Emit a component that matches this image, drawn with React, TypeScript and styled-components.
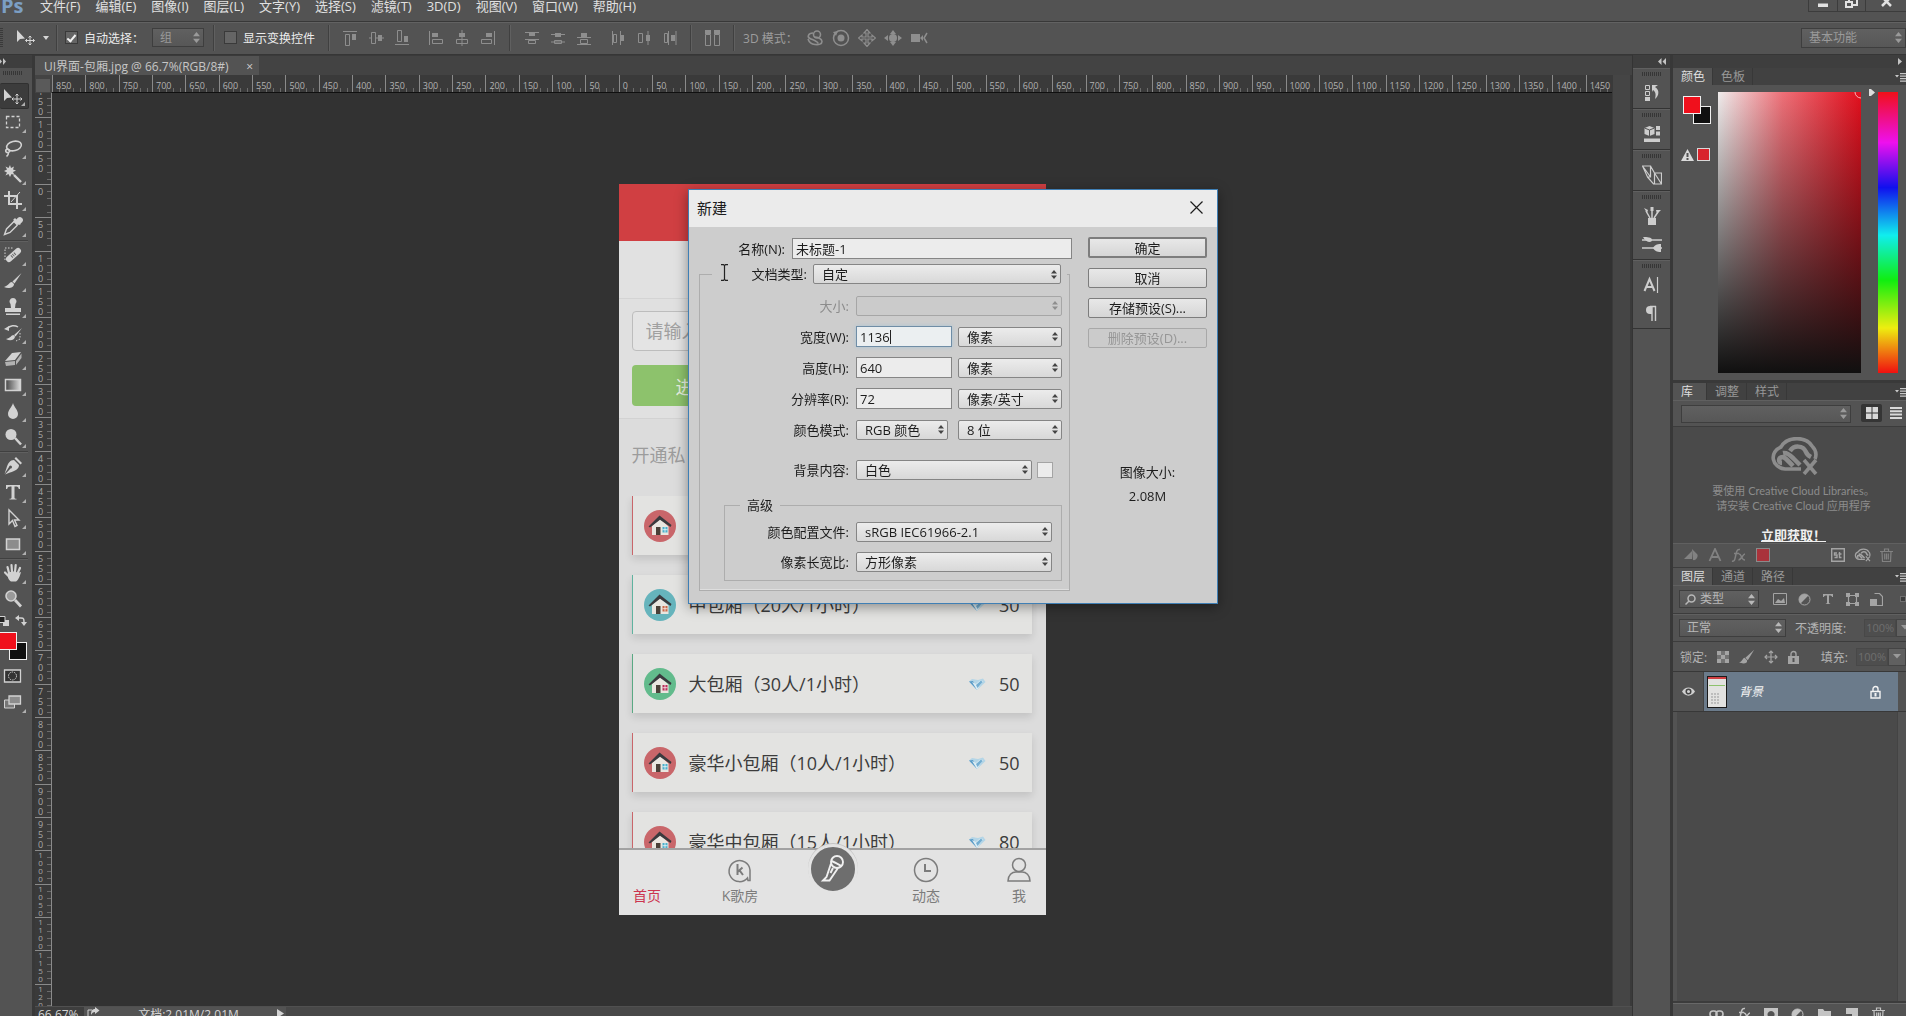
import React, { useId, type ReactNode } from 'react';
import styled, { createGlobalStyle, css } from 'styled-components';

const ui = `'Open Sans', 'Noto Sans CJK SC', sans-serif`;

const GlobalStyle = createGlobalStyle`
  *, *::before, *::after { box-sizing: border-box; }
  body { margin: 0; overflow: hidden; background: #323232; font-family: ${ui}; font-size: 12px; color: #d6d6d6; }
  button, input, select { font: inherit; color: inherit; margin: 0; border-radius: 0; outline: none; }
  button { border: 0; padding: 0; background: none; }
  svg { display: block; flex: none; }
`;

/* ---------- icon helper ---------- */
const Icon = ({ s = 20, w, h, vb, children, fill = 'none', stroke = 'currentColor', sw = 1 }: {
  s?: number; w?: number; h?: number; vb?: string; children?: ReactNode; fill?: string; stroke?: string; sw?: number;
}) => (
  <svg width={w ?? s} height={h ?? s} viewBox={vb ?? `0 0 ${w ?? s} ${h ?? s}`} fill={fill} stroke={stroke} strokeWidth={sw} aria-hidden="true">
    {children}
  </svg>
);

const F = { fill: 'currentColor', stroke: 'none' };

/* ---------- frame ---------- */
const Shell = styled.div`
  display: flex; flex-direction: column; height: 100vh; overflow: hidden; background: #535353;
`;
const MenuBar = styled.header`
  display: flex; align-items: flex-start; justify-content: space-between; height: 22px; flex: none;
  background: #535353; border-bottom: 1px solid #383838;
`;
const MenuList = styled.nav`display: flex; gap: 15px;`;
const Logo = styled.span`
  width: 25px; padding-left: 1px; font-weight: 700; font-size: 20px; line-height: 12px; color: #7c9fc4;
`;
const MenuItem = styled.button`font-size: 13px; line-height: 12px; color: #e0e0e0; white-space: nowrap;`;
const WindowButtons = styled.div`display: flex; height: 12px; border: 1px solid #3c3c3c; border-top: 0; border-right: 0; overflow: hidden;`;
const WindowButton = styled.button<{ $wide?: boolean }>`
  width: ${p => (p.$wide ? 41 : 28)}px; display: flex; justify-content: center; align-items: flex-start; color: #e2e2e2;
  & + & { border-left: 1px solid #3c3c3c; }
`;

const OptionsBar = styled.div`
  display: flex; align-items: center; height: 33px; flex: none; padding-bottom: 2px; background: #535353;
  border-top: 1px solid #626262; border-bottom: 1px solid #363636; overflow: hidden;
`;
const Grip = styled.span<{ $h?: boolean }>`
  flex: none;
  ${p => p.$h
    ? css`width: 20px; height: 4px; background: repeating-linear-gradient(to right, #363636 0 1px, transparent 1px 2px);`
    : css`width: 3px; height: 20px; background: repeating-linear-gradient(to bottom, #3a3a3a 0 1px, transparent 1px 2px);`}
`;
const Divider = styled.span<{ $gap?: number }>`
  flex: none; width: 2px; height: 26px; margin: 0 ${p => p.$gap ?? 8}px; background: #404040; border-right: 1px solid #606060;
`;
const OptionGroup = styled.div<{ $ml?: number }>`display: flex; align-items: center; margin-left: ${p => p.$ml ?? 0}px;`;
const OptionButton = styled.button`
  width: 26px; height: 22px; display: flex; align-items: center; justify-content: center; color: #8e8e8e;
`;
const CheckLabel = styled.label`display: flex; align-items: center; gap: 6px; font-size: 12px; color: #ececec; white-space: nowrap;`;
const CheckBox = styled.input`
  appearance: none; width: 13px; height: 13px; flex: none; border: 1px solid #3a3a3a; background: #656565; display: grid; place-items: center;
  &:checked::after { content: ''; width: 5px; height: 9px; border: solid #f2f2f2; border-width: 0 2px 2px 0; transform: rotate(40deg); }
`;
const Muted = styled.span`color: #9d9d9d; white-space: nowrap;`;
const Spacer = styled.span`flex: 1;`;

/* dark-theme drop-down */
const DarkWrap = styled.span<{ $w?: number; $h?: number; $dim?: boolean; $lead?: boolean }>`
  display: grid; align-items: center; height: ${p => p.$h ?? 19}px; flex: none;
  width: ${p => (p.$w ? `${p.$w}px` : 'auto')};
  color: ${p => (p.$dim ? '#9a9a9a' : '#b8b8b8')};
  select { grid-area: 1 / 1; appearance: none; width: 100%; height: 100%; padding: 0 16px 0 ${p => (p.$lead ? 20 : 7)}px; border: 1px solid #3e3e3e;
    background: linear-gradient(#606060, #575757); opacity: 1; font-size: 12px; line-height: 16px; }
  svg { grid-area: 1 / 1; justify-self: end; margin-right: 4px; pointer-events: none; }
  svg + svg { justify-self: start; margin: 0 0 0 6px; }
`;
const Arrows = () => <Icon w={7} h={11} stroke="none" fill="currentColor"><path d="M0 4.2 3.5 0 7 4.2zM0 6.800h7L3.5 11z" /></Icon>;
const DarkSelect = ({ label, value, w, h, dim, lead }: { label: string; value: string; w?: number; h?: number; dim?: boolean; lead?: ReactNode }) => (
  <DarkWrap $w={w} $h={h} $dim={dim} $lead={!!lead}>
    <select aria-label={label} defaultValue={value}><option>{value}</option></select><Arrows />{lead}
  </DarkWrap>
);

/* ---------- body ---------- */
const Body = styled.div`display: flex; flex: 1; min-height: 0;`;
const ToolColumn = styled.aside`
  width: 32px; flex: none; background: #535353; display: flex; flex-direction: column; align-items: stretch; overflow: hidden;
`;
const DockHeader = styled.div<{ $end?: boolean }>`
  height: 13px; flex: none; background: #3e3e3e; color: #c4c4c4; display: flex; align-items: center;
  justify-content: ${p => (p.$end ? 'flex-end' : 'flex-start')}; padding-right: ${p => (p.$end ? 4 : 0)}px;
`;
const ToolGrip = styled.div`height: 15px; flex: none; padding: 3px 0 0 3px;`;
const Tool = styled.button<{ $on?: boolean; $plain?: boolean }>`
  position: relative; width: 29px; height: 26px; flex: none; padding-left: 3px; display: flex; align-items: center; color: #d2d2d2;
  ${p => p.$on && css`background: #3c3c3c; border: 1px solid #303030; border-left: 0; border-radius: 2px;`}
  &::after { content: ${p => (p.$plain ? 'none' : "''")}; position: absolute; right: 3px; bottom: 2px; border: 2px solid; border-color: transparent #b0b0b0 #b0b0b0 transparent; }
`;
const ToolRule = styled.hr`width: 28px; height: 2px; flex: none; margin: 1px 0 0; border: 0; border-top: 1px solid #404040; background: #606060;`;
const SwatchRow = styled.div`height: 17px; flex: none; display: flex; align-items: center; justify-content: space-between; padding-right: 5px; color: #d2d2d2;`;
const SwatchPair = styled.div<{ $panel?: boolean }>`
  display: grid; flex: none; align-content: start;
  grid-template-columns: repeat(2, 10px) 8px; grid-template-rows: repeat(2, 10px) 8px;
  ${p => !p.$panel && css`margin: 3px 0 0 -1px; height: 31px;`}
`;
const Swatch = styled.button<{ $c: string; $back?: boolean }>`
  width: 18px; height: 18px; border: 1px solid #f0f0f0; background: ${p => p.$c};
  grid-area: ${p => (p.$back ? '2 / 2' : '1 / 1')}; z-index: ${p => (p.$back ? 0 : 1)};
`;

/* ---------- document ---------- */
const DocumentArea = styled.main`
  flex: 1; min-width: 0; display: flex; flex-direction: column; background: #444; border-left: 3px solid #383838; overflow: hidden;
`;
const TabBar = styled.div`height: 20px; flex: none; display: flex; background: #434343; border-top: 1px solid #3a3a3a;`;
const DocTab = styled.div`
  display: flex; align-items: center; justify-content: space-between; width: 224px; padding: 2px 6px 0 9px;
  background: #535353; color: #c6c6c6; font-size: 12px; line-height: 16px; white-space: nowrap;
`;
const TabClose = styled.button`color: #d0d0d0; font-size: 12px; line-height: 16px;`;
const Workspace = styled.div`
  flex: 1; min-height: 0; display: grid; grid-template-columns: 17px 1fr 20px; grid-template-rows: 18px 1fr 10px;
`;
const Corner = styled.div`margin: 4px 2px 1px 1px; background: #5a5a5a;`;
const RulerTop = styled.div`overflow: hidden; background: #3a3a3a; border-bottom: 1px solid #101010;`;
const RulerTopScale = styled.div`display: grid; grid-template-columns: repeat(47, minmax(0, 1fr)); width: 1567px; height: 17px;`;
const TickX = styled.span`
  border-left: 1px solid #8a8a8a; padding: 4px 0 0 3px; font-size: 9px; line-height: 13px; color: #b2b2b2;
  background: repeating-linear-gradient(to right, transparent 0 6px, #6a6a6a 6px 7px) 0 100% / 100% 4px no-repeat;
`;
const RulerLeft = styled.div`overflow: hidden; background: #3a3a3a; border-right: 1px solid #8a8a8a;`;
const RulerLeftScale = styled.div`display: grid; grid-template-rows: repeat(28, minmax(0, 1fr)); height: 933px; margin-top: -9px;`;
const TickY = styled.span<{ $n: number }>`
  display: flex; flex-direction: column; align-items: center; border-top: 1px solid #8a8a8a; padding: ${p => (p.$n > 3 ? 0 : 2)}px 5px 0 0; overflow: hidden;
  font-size: ${p => (p.$n > 3 ? 8 : 9)}px; line-height: ${p => (p.$n > 3 ? 8 : 10)}px; color: #a8a8a8;
  background: repeating-linear-gradient(to bottom, transparent 0 6px, #6a6a6a 6px 7px) 100% 0 / 4px 100% no-repeat;
`;
const Canvas = styled.div`background: #323232; display: flex; align-items: center; justify-content: center; overflow: hidden;`;
const Scroll = styled.div`background: #454545; border-left: 1px solid #3a3a3a; border-right: 2px solid #3a3a3a;`;
const StatusBar = styled.footer`
  grid-column: 1 / -1; display: flex; align-items: flex-start; overflow: hidden; background: #484848; color: #d4d4d4; border-top: 1px solid #505050;
  font-size: 12px; line-height: 16px; white-space: nowrap;
`;
const Zoomed = styled.span`width: 49px; padding-left: 3px; background: #3e3e3e;`;
const StatusInfo = styled.span`display: flex; justify-content: space-between; width: 202px; padding: 0 2px 0 3px; background: #535353;`;

/* ---------- phone artwork ---------- */
const Phone = styled.section`
  width: 427px; height: 731px; display: flex; flex-direction: column; background: #dcdcdc; color: #3c3c3c; overflow: hidden; flex: none;
`;
const PhoneHeader = styled.div`height: 57px; flex: none; background: #d03f42;`;
const PhoneBlank = styled.div`height: 58px; flex: none; background: #e1e1e1; border-bottom: 1px solid #d4d4d4;`;
const PhoneForm = styled.div`flex: none; height: 120px; padding: 12px 14px 0 13px; display: flex; flex-direction: column; gap: 14px; background: #e0e0e0; border-bottom: 1px solid #d2d2d2;`;
const PhoneInput = styled.input`height: 40px; border: 1px solid #bdbdbd; border-radius: 4px; background: #e4e4e4; padding: 0 13px; font-size: 18px; &::placeholder { color: #a0a0a0; opacity: 1; }`;
const PhoneGo = styled.button`height: 41px; border-radius: 4px; background: #8dc26c; color: #e6eede; font-size: 18px; text-align: left; padding-left: 44px;`;
const PhoneTitle = styled.h2`margin: 0; height: 77px; flex: none; padding: 0 13px; font-weight: 400; font-size: 18px; line-height: 72px; color: #9c9c9c;`;
const RoomList = styled.div`flex: 1; min-height: 0; overflow: hidden; display: flex; flex-direction: column; gap: 20px; padding: 0 14px 0 13px;`;
const Room = styled.div<{ $c: string }>`
  height: 59px; flex: none; display: flex; align-items: center; gap: 13px; padding: 0 12px 0 11px; background: #e3e3e1;
  border-left: 1px solid ${p => p.$c}; box-shadow: 0 4px 8px rgba(0,0,0,.12); font-size: 18px; line-height: 24px;
`;
const RoomName = styled.span`flex: 1; white-space: nowrap;`;
const PhoneNav = styled.nav`
  height: 67px; flex: none; display: grid; grid-template-columns: repeat(5, 1fr); margin: 0 -20px 0 -18px; background: #e3e3e3; border-top: 2px solid #a2a2a2;
`;
const NavItem = styled.a<{ $on?: boolean }>`
  display: flex; flex-direction: column; align-items: center; gap: 3px; padding-top: 7px; text-decoration: none;
  font-size: 14px; line-height: 20px; color: ${p => (p.$on ? '#cc3550' : '#7c7c7c')};
`;
const Mic = styled.button`
  position: relative; top: -6px; justify-self: center; width: 50px; height: 50px; border-radius: 50%; border: 3px solid #e3e3e3; background: #6e6e6e; color: #f0f0f0;
  display: grid; place-items: center; box-shadow: 0 -1px 0 0 #c4c4c4;
`;

const House = ({ c, win }: { c: string; win: string }) => (
  <Icon s={32} stroke="none">
    <circle cx="16" cy="16" r="16" fill={c} />
    <path d="M8 16 16 9l8.500 7.500V25H8z" fill="#e9e6e0" />
    <path d="M4.500 16.500 15.500 5.500l12 9.500-1 2L16 9.800 6 17.500z" fill="#3a3a3e" />
    <path d="M12 17h4.500v8H12z" fill="#4a4038" /><path d="M18.500 17h5v5.500h-5z" fill={win} />
    <path d="M21 17v5.500M18.500 19.700h5" stroke="#fff" strokeWidth=".7" />
  </Icon>
);
const Diamond = () => (
  <Icon w={18} h={14} stroke="none">
    <path d="M1 4.500 4 2l6 1 5-1.500L17.500 5 9 13z" fill="#b4d5e6" /><path d="m1 4.500 4-.5 4 9z" fill="#5a9cc8" />
    <path d="m4 5 4 2 4-3.500 3 .5-6 9z" fill="#dcedf4" /><path d="m8 8 5-4.500 1.500 1.500L9.500 11z" fill="#74aed2" />
  </Icon>
);

const rooms = [
  { name: '小包厢（10人/1小时）', price: 30, c: '#c9666a', line: '#c9666a', win: '#4db0cc' },
  { name: '中包厢（20人/1小时）', price: 30, c: '#66b4bc', line: '#5fb39f', win: '#c96a4a' },
  { name: '大包厢（30人/1小时）', price: 50, c: '#62bb8c', line: '#5aa983', win: '#b8305a' },
  { name: '豪华小包厢（10人/1小时）', price: 50, c: '#c9666a', line: '#c9666a', win: '#4db0cc' },
  { name: '豪华中包厢（15人/1小时）', price: 80, c: '#c9666a', line: '#c9666a', win: '#4db0cc' },
];

const PhoneArt = () => (
  <Phone>
    <PhoneHeader /><PhoneBlank />
    <PhoneForm>
      <PhoneInput aria-label="房间" placeholder="请输入" />
      <PhoneGo>进</PhoneGo>
    </PhoneForm>
    <PhoneTitle>开通私</PhoneTitle>
    <RoomList>
      {rooms.map(r => (
        <Room key={r.name} $c={r.line}>
          <House c={r.c} win={r.win} /><RoomName>{r.name}</RoomName><Diamond /><span>{r.price}</span>
        </Room>
      ))}
    </RoomList>
    <PhoneNav>
      <NavItem href="#home" $on><Icon s={26} />首页</NavItem>
      <NavItem href="#k">
        <Icon s={26} sw={1.500}><path d="M20.500 21A10.500 10.500 0 1 1 23 13v10.500h-2z" /><path d="M10.500 7v11M15.500 10.500l-5 4.500M12.500 13.300l3.500 4.700" strokeWidth="2" /></Icon>K歌房
      </NavItem>
      <Mic aria-label="录音">
        <Icon s={32} sw={1.900}><circle cx="20" cy="9" r="6" /><path d="M14.500 8c3 1 7 3.500 10 5M14 10.500 9.500 24 6 27.500h6.500L21 15" /><path d="m16 15-2.500 5" /></Icon>
      </Mic>
      <NavItem href="#news"><Icon s={26} sw={1.500}><circle cx="13" cy="13" r="11.500" /><path d="M12 7v7h6" strokeWidth="2" /></Icon>动态</NavItem>
      <NavItem href="#me"><Icon s={26} sw={1.500}><circle cx="13" cy="8" r="6.500" /><path d="M2 24c0-6 4-9 8-9h6c4 0 8 3 8 9z" /></Icon>我</NavItem>
    </PhoneNav>
  </Phone>
);

/* ---------- right side ---------- */
const IconDock = styled.aside`width: 41px; flex: none; background: #535353; border-left: 1px solid #343434; border-right: 3px solid #383838;`;
const DockGroup = styled.div`
  display: flex; flex-direction: column; align-items: center; gap: 5px; padding: 3px 0 4px; border-bottom: 1px solid #333; border-top: 1px solid #606060; color: #cdcdcd;
`;
const DockButton = styled.button`width: 30px; height: 22px; margin-top: 1px; display: grid; place-items: center;`;

const Panels = styled.aside`width: 233px; flex: none; display: flex; flex-direction: column; background: #535353; overflow: hidden;`;
const PanelTabs = styled.div`
  display: flex; height: 17px; flex: none; background: #414141; color: #989898; line-height: 16px; font-size: 12px;
`;
const PanelTab = styled.button<{ $on?: boolean }>`
  min-width: 34px; padding: 0 7px 0 8px; border-right: 1px solid #383838; text-align: left;
  ${p => p.$on && css`background: #535353; color: #dedede;`}
`;
const PanelMenu = styled.button`margin-left: auto; color: #c8c8c8; display: grid; align-items: center; width: 11px;`;
const ColorPanel = styled.div`display: flex; height: 298px; flex: none; padding: 7px 8px 0; border-bottom: 3px solid #393939;`;
const ColorLeft = styled.div`width: 37px; padding: 4px 0 0 2px; display: flex; flex-direction: column; gap: 24px;`;
const Warn = styled.div`display: flex; align-items: center; gap: 3px; color: #dadada; margin-left: -2px;`;
const Chip = styled.button<{ $c: string; $s: number; $line?: string }>`
  width: ${p => p.$s}px; height: ${p => p.$s}px; background: ${p => p.$c}; border: 1px solid ${p => p.$line ?? '#d8d8d8'};
`;
const Field = styled.div`
  flex: 1; height: 281px; overflow: hidden; display: flex; justify-content: flex-end; color: #f5b6b6;
  background: linear-gradient(to bottom, rgba(16,16,16,0), #101010), linear-gradient(to right, #efecec, #ee7078 45%, #e20f1d);
`;
const HuePointer = styled.div`width: 17px; padding-left: 8px; color: #ddd; margin-top: -3px;`;
const Hue = styled.div`
  width: 20px; height: 281px; flex: none;
  background: linear-gradient(#f01018, #ee10ee 18%, #1010ee 34%, #10eeee 51%, #10ee10 67%, #eeee10 84%, #f01010);
`;
const Row = styled.div<{ $h: number; $line?: boolean; $gap?: number; $pad?: number }>`
  display: flex; align-items: center; flex: none; height: ${p => p.$h}px; gap: ${p => p.$gap ?? 0}px; padding-left: ${p => p.$pad ?? 6}px; color: #b4b4b4; overflow: hidden;
  ${p => p.$line && css`border-bottom: 1px solid #3c3c3c; box-shadow: inset 0 1px #606060;`}
  > label, > span { white-space: nowrap; }
`;
const ViewButton = styled.button<{ $on?: boolean }>`
  width: 21px; height: 18px; flex: none; display: grid; place-items: center; color: #d8d8d8; border-radius: 2px; background: ${p => (p.$on ? '#353535' : 'none')};
`;
const LibraryBody = styled.div`
  height: 116px; flex: none; display: flex; flex-direction: column; align-items: center; padding: 10px 0 0 8px; background: #4a4a4a; color: #8c8c8c;
  font-family: Lato, 'Noto Sans CJK SC', sans-serif; font-size: 11px; line-height: 15px; text-align: center; white-space: nowrap;
  p { margin: 8px 0 14px; }
`;
const GetLink = styled.a`font-size: 13px; font-weight: 700; line-height: 16px; color: #f0f0f0;`;
const Small = styled.button<{ $w?: number; $dim?: boolean }>`
  width: ${p => p.$w ?? 24}px; height: 20px; flex: none; display: grid; place-items: center; color: ${p => (p.$dim ? '#828282' : '#a4a4a4')};
`;
const Percent = styled.input`width: 32px; height: 18px; flex: none; border: 1px solid #484848; background: #4e4e4e; color: #6e6e6e; font-size: 11px; text-align: center; padding: 0;`;
const DropButton = styled.button`width: 18px; height: 18px; flex: none; background: #606060; border: 1px solid #444; color: #9a9a9a; display: grid; place-items: center;`;
const LayerRow = styled.div`display: flex; height: 41px; flex: none; border-bottom: 1px solid #383838; border-top: 1px solid #383838;`;
const Eye = styled.button`width: 31px; display: grid; place-items: center; color: #cfcfcf; border-right: 1px solid #444;`;
const LayerMain = styled.div`flex: 1; display: flex; align-items: center; gap: 12px; padding: 0 17px 0 3px; margin-right: 8px; background: #6b7b8b; color: #f4f4f4; font-style: italic; font-size: 12px; line-height: 16px;`;
const LayerSpace = styled.div`flex: 1; margin: 0 8px 0 4px; background: #4a4a4a; border-right: 1px solid #444;`;
const PanelFoot = styled.div`
  height: 13px; flex: none; overflow: hidden; display: flex; align-items: flex-start; justify-content: center; padding-left: 16px; color: #d0d0d0; border-top: 1px solid #686868; box-shadow: 0 -2px #3c3c3c;
  ${Small} { color: #c4c4c4; }
`;

const MenuGlyph = () => <Icon w={11} h={10} stroke="none" fill="currentColor"><path d="M0 3h4L2 5.500zM5 1h6v1.200H5zM5 3.500h6v1.200H5zM5 6h6v1.200H5zM5 8.500h6v1.200H5z" /></Icon>;
const Cloud = ({ w = 50, h = 38 }: { w?: number; h?: number }) => (
  <Icon w={w} h={h} vb="0 0 50 38" sw={3.600}>
    <path d="M32 32H16A13 11.500 0 0 1 12 10C18-1 37-1 43 9c4 4 5 8 3 13" />
    <path d="M24 29c-4-4-7-8-10-9-5 0-5 6-1 6M14 16c5-1 8 3 11 6l6 6M21 14c4-6 13-6 16 1 1 3 3 4 5 5" strokeWidth="4.500" />
    <path d="m35 23 12 14M47 23 35 37" />
  </Icon>
);
const Lock = ({ open = false }: { open?: boolean }) => (
  <Icon w={11} h={14} sw={1.400}><path d="M3 6V4a2.500 2.500 0 0 1 5 0v2" />{open ? <><path d="M1 6.500h9v6.500H1z" /><path d="M4.500 8h2v3.500h-2z" {...F} /></> : <path d="M0 6h11v8H0zM4.500 8v4h2V8z" {...F} fillRule="evenodd" />}</Icon>
);
const Fx = () => <Icon w={16} h={14} sw={1.500}><path d="M1 13c3 1 3-3 4-7s2-5 4-4.500M3 5.500h5M8 6c3 0 2 6 6 6M14 6c-2 0-4 6-6.500 6" /></Icon>;
const Trash = () => <Icon w={13} h={14} sw={1.200}><path d="M0 3.500h13M4.500 3V1h4v2M2 4l.5 9.500h8L11 4M4.700 5.500v6M6.500 5.500v6M8.300 5.500v6" /></Icon>;
const HalfCircle = () => <Icon s={13}><circle cx="6.500" cy="6.500" r="5.500" strokeWidth="1" /><path d="M2.600 10.400A5.500 5.500 0 0 1 10.400 2.600z" {...F} /></Icon>;
const Down = () => <Icon w={8} h={5} stroke="none" fill="currentColor"><path d="M0 0h8L4 4.500z" /></Icon>;
const MoveCross = () => <Icon s={14} sw={1.200}><path d="M7 1v12M1 7h12M5 3l2-2 2 2M5 11l2 2 2-2M3 5 1 7l2 2M11 5l2 2-2 2" /></Icon>;
const Brush = () => <Icon s={20}><path d="M18.500 2 9.500 10.500l2 2z" {...F} /><path d="M9 11c-3 0-3 3.500-8 5 4 2 10 1 10-3z" {...F} /></Icon>;

/* ---------- dialog ---------- */
const Overlay = styled.div`position: fixed; inset: 0; display: flex; justify-content: center; align-items: flex-start; padding-top: 189px; pointer-events: none;`;
const Dialog = styled.section`
  width: 530px; background: #cdcdcd; border: 1px solid #3f7fb5; color: #1c1c1c; font-size: 13px; line-height: 16px; box-shadow: 0 3px 12px rgba(0,0,0,.4); pointer-events: auto;
`;
const DialogTitle = styled.div`
  height: 37px; display: flex; align-items: center; justify-content: space-between; padding: 0 14px 2px 8px; background: #ebebeb;
  h1 { margin: 0; font-weight: 400; font-size: 15px; line-height: 20px; }
`;
const DialogBody = styled.div`display: grid; grid-template-columns: 373px 119px; gap: 16px; padding: 10px 10px 12px;`;
const FormSide = styled.form`padding-top: 1px;`;
const Line = styled.div<{ $label: number; $gapTop?: number }>`
  display: grid; grid-template-columns: ${p => p.$label}px 1fr; column-gap: 7px; height: 21px; margin-top: ${p => p.$gapTop ?? 0}px; align-items: center;
  > label { text-align: right; white-space: nowrap; }
`;
const Controls = styled.div<{ $gap?: number }>`display: flex; gap: ${p => p.$gap ?? 6}px; align-items: center;`;
const boxInput = css`height: 21px; padding: 0 3px; border: 1px solid #858585; background: #ececec; line-height: 16px;`;
const NameInput = styled.input`${boxInput} width: 100%; min-width: 0;`;
const NumberInput = styled.input<{ $focus?: boolean }>`
  ${boxInput} width: 96px;
  ${p => p.$focus && css`border-color: #6f8da6; background: linear-gradient(#222, #222) 33px 3px / 1px 14px no-repeat, #ebeff1; box-shadow: 0 0 4px #a9c4d6;`}
`;
const Group = styled.fieldset`margin: 5px 2px 0 0; padding: 11px 0 9px; border: 1px solid #adadad; box-shadow: inset 0 -1px #dedede; min-width: 0;`;
const GroupLegend = styled.legend`display: flex; align-items: center; gap: 6px; margin-left: 12px; padding: 0 6px 0 0; label { width: 95px; text-align: right; }`;
const Fields = styled.div<{ $gap?: number }>`display: grid; row-gap: ${p => p.$gap ?? 10}px;`;
const Advanced = styled.fieldset`margin: 17px 7px 0 24px; padding: 8px 0; border: 1px solid #adadad; min-width: 0; display: block;`;
const AdvancedLegend = styled.legend`margin-left: 15px; padding: 0 7px; line-height: 16px;`;
const LightWrap = styled.span<{ $w: number; $off?: boolean }>`
  display: grid; align-items: center; width: ${p => p.$w}px; height: 20px; flex: none; color: ${p => (p.$off ? '#8e8e8e' : '#1c1c1c')};
  select { grid-area: 1 / 1; appearance: none; width: 100%; height: 100%; padding: 0 14px 0 8px; opacity: 1; border: 1px solid ${p => (p.$off ? '#a6a6a6' : '#858585')}; border-radius: 2px;
    background: ${p => (p.$off ? '#cbcbcb' : 'linear-gradient(#ececec, #d8d8d8)')}; }
  svg { grid-area: 1 / 1; justify-self: end; margin-right: 4px; pointer-events: none; }
`;
const LightSelect = ({ id, value, w, off, label }: { id?: string; value: string; w: number; off?: boolean; label?: string }) => (
  <LightWrap $w={w} $off={off}>
    <select id={id} aria-label={label} disabled={off} defaultValue={value}><option>{value}</option></select>
    <Icon w={6} h={9} stroke="none" fill={off ? '#8e8e8e' : '#444'}><path d="M0 3.500 3 0l3 3.500zM0 5.500h6L3 9z" /></Icon>
  </LightWrap>
);
const ButtonSide = styled.div`display: flex; flex-direction: column; gap: 10px;`;
const PushButton = styled.button<{ $main?: boolean }>`
  height: ${p => (p.$main ? 21 : 20)}px; flex: none; line-height: 16px; border: ${p => (p.$main ? 2 : 1)}px solid #7d7d7d; border-radius: 2px; background: linear-gradient(#e8e8e8, #d6d6d6);
  &:disabled { color: #969696; border-color: #a8a8a8; background: #cbcbcb; }
`;
const SizeInfo = styled.div`margin-top: 106px; display: grid; row-gap: 8px; text-align: center;`;
const Dim = styled.span<{ $off?: boolean }>`color: ${p => (p.$off ? '#8c8c8c' : 'inherit')};`;
const TextCursor = styled.span`position: absolute; left: 720px; top: 264px; color: #222;`;

const NumberLine = ({ label, value, unit, focus }: { label: string; value: string; unit: string; focus?: boolean }) => {
  const id = useId();
  return (
    <Line $label={149}>
      <label htmlFor={id}>{label}</label>
      <Controls><NumberInput id={id} defaultValue={value} $focus={focus} /><LightSelect label={`${label} 单位`} value={unit} w={104} /></Controls>
    </Line>
  );
};

const NewDialog = () => (
  <Overlay>
    <Dialog role="dialog" aria-labelledby="dlg-title">
      <DialogTitle>
        <h1 id="dlg-title">新建</h1>
        <button aria-label="关闭"><Icon s={13} sw={1.200}><path d="m.5.5 12 12M12.500.5l-12 12" /></Icon></button>
      </DialogTitle>
      <DialogBody>
        <FormSide>
          <Line $label={86}><label htmlFor="doc-name">名称(N):</label><NameInput id="doc-name" defaultValue="未标题-1" /></Line>
          <Group>
            <GroupLegend><label htmlFor="doc-type">文档类型:</label><LightSelect id="doc-type" value="自定" w={248} /></GroupLegend>
            <Fields>
              <Line $label={149}><label htmlFor="doc-size"><Dim $off>大小:</Dim></label><LightSelect id="doc-size" value="" w={206} off /></Line>
              <NumberLine label="宽度(W):" value="1136" unit="像素" focus />
              <NumberLine label="高度(H):" value="640" unit="像素" />
              <NumberLine label="分辨率(R):" value="72" unit="像素/英寸" />
              <Line $label={149}>
                <label htmlFor="mode">颜色模式:</label>
                <Controls $gap={10}><LightSelect id="mode" value="RGB 颜色" w={92} /><LightSelect label="位深" value="8 位" w={104} /></Controls>
              </Line>
              <Line $label={149} $gapTop={9}>
                <label htmlFor="bg">背景内容:</label>
                <Controls $gap={5}><LightSelect id="bg" value="白色" w={176} /><Chip type="button" aria-label="背景颜色" $c="#ececec" $s={16} $line="#a4a4a4" /></Controls>
              </Line>
            </Fields>
            <Advanced>
              <AdvancedLegend>高级</AdvancedLegend>
              <Fields $gap={9}>
                <Line $label={124}><label htmlFor="profile">颜色配置文件:</label><LightSelect id="profile" value="sRGB IEC61966-2.1" w={196} /></Line>
                <Line $label={124}><label htmlFor="aspect">像素长宽比:</label><LightSelect id="aspect" value="方形像素" w={196} /></Line>
              </Fields>
            </Advanced>
          </Group>
        </FormSide>
        <ButtonSide>
          <PushButton $main>确定</PushButton><PushButton>取消</PushButton><PushButton>存储预设(S)...</PushButton><PushButton disabled>删除预设(D)...</PushButton>
          <SizeInfo><span>图像大小:</span><span>2.08M</span></SizeInfo>
        </ButtonSide>
      </DialogBody>
    </Dialog>
    <TextCursor><Icon w={9} h={17} sw={1.200}><path d="M1 .7h2.500l1 1 1-1H8M4.500 1.500v14M1 16.300h2.500l1-1 1 1H8" /></Icon></TextCursor>
  </Overlay>
);

/* ---------- icon sets ---------- */
const bars = (a: string, b: string, line: string) => (
  <Icon s={16}><path d={line} /><path d={a} /><path d={b} {...F} /></Icon>
);
const alignA = [
  bars('M3.500 4.500h4v11h-4z', 'M10 4h4v6h-4z', 'M1 1.500h14'),
  bars('M3.500 2.500h4v11h-4z', 'M10 5h4v6h-4z', 'M1 8h2M7 8h9'),
  bars('M3.500 .5h4v11h-4z', 'M10 6h4v6h-4z', 'M1 14.500h14'),
];
const alignB = [
  bars('M4.500 9.500h10v4h-10z', 'M4 3h6v4H4z', 'M1.500 1v14'),
  bars('M2.500 9.500h11v4h-11z', 'M5 3h6v4H5z', 'M8 0v16'),
  bars('M1.500 9.500h10v4h-10z', 'M6 3h6v4H6z', 'M14.500 1v14'),
];
const distA = [
  bars('M4.500 10.500h7v3h-7z', 'M5 3h6v3H5z', 'M1 2.500h14M1 9.500h14'),
  bars('M4.500 10.500h7v3h-7z', 'M5 3h6v4H5z', 'M1 4.500h14M1 12h14'),
  bars('M4.500 9.500h7v4h-7z', 'M5 3h6v4H5z', 'M1 7.500h14M1 14.500h14'),
];
const distB = [
  bars('M3.500 4.500h3v8h-3z', 'M11 5h3v6h-3z', 'M2.500 1v14M10.500 1v14'),
  bars('M2.500 3.500h4v9h-4z', 'M10 5h4v6h-4z', 'M12 1v14'),
  bars('M2.500 3.500h3v9h-3z', 'M9 5h4v6H9z', 'M6.500 1v14M14 1v14'),
];
const mode3d = [
  <Icon s={18} sw={1.600}><circle cx="11" cy="5.500" r="3.500" /><path d="M7 4C2 4 1 8 4 9.500s8 3 8 5M8 8c4 0 8 2 8 4.500S13 16 9 15.500 3 13 2 10" /></Icon>,
  <Icon s={18} sw={1.500}><circle cx="9" cy="9" r="7.500" /><circle cx="9" cy="9" r="3.500" {...F} /><path d="m1 3 5-1-2 5z" {...F} /></Icon>,
  <Icon s={18} sw={1.200}><path d="M8 8V4H6l3-3.500L12 4h-2v4h4V6l3.500 3-3.500 3v-2h-4v4h2l-3 3.500L6 14h2v-4H4v2L.5 9 4 6v2z" /></Icon>,
  <Icon s={18}><path d="m9 1 3 4H6zM9 17l3-4H6zM0 9l4-3v6zM18 9l-4-3v6z" {...F} /><circle cx="9" cy="9" r="4" {...F} /></Icon>,
  <Icon s={18} sw={1.500}><path d="M1 5h9v8H1zM10 9l3-3v6z" {...F} /><path d="m17 4-3 5 3 5" /></Icon>,
];

const tools1: [string, ReactNode][] = [
  ['移动', <Icon s={20}><path d="M1 3v12l3-3 5-.5z" {...F} /><path d="M14 8v10M9 13h10M12.500 9.500 14 8l1.500 1.500M12.500 16.500 14 18l1.500-1.500M10.500 11.500 9 13l1.500 1.500M17.500 11.500 19 13l-1.500 1.500" /></Icon>],
  ['选框', <Icon s={20} sw={1.300}><path d="M3.500 4.500h13v11h-13z" strokeDasharray="3 2" /></Icon>],
  ['套索', <Icon s={20} sw={1.600}><ellipse cx="11" cy="8" rx="7.500" ry="4.700" transform="rotate(-14 11 8)" /><path d="M5 11c-3 0-3 4 0 3.500s1.500-3 0-3.500M5.500 14.500c0 2-.5 3-2 4" /></Icon>],
  ['魔棒', <Icon s={20}><path d="m7 1 1 3 3-1.500L10 5.500l3 1-3 1.500 1.500 3-3-1L7 13l-1.500-3-3 1.500L4 8.500 1 7l3-1.500L2.500 2.500l3 1.500z" {...F} /><path d="m11 11 7 7" strokeWidth="2.400" /></Icon>],
  ['裁剪', <Icon s={20} sw={2}><path d="M6 1v13h13M1 6h13v13" /><path d="m8 12 9-10" strokeWidth="1" /></Icon>],
  ['吸管', <Icon s={20}><path d="M11 5.500 3.500 13 1.500 18.500 7 16.500l7.500-7.500" strokeWidth="1.400" /><path d="m12 2 6 6-2 1-1-.5-1 1-4-4 1-1L10 4zM13 4c2-3 4-4 6-2s1 4-2 6z" {...F} /></Icon>],
];
const tools2: [string, ReactNode][] = [
  ['修复', <Icon s={20}><path d="M2 15V3h9" strokeDasharray="1.500 1.500" /><path d="m6 14 9-8" strokeWidth="6" strokeLinecap="round" /><path d="m8.500 11.800 4-3.600" stroke="#666" strokeWidth="3" strokeDasharray="1 1" /></Icon>],
  ['画笔', <Brush />],
  ['图章', <Icon s={20}><path d="M10 1a3.500 3.500 0 0 1 2.500 6L12 11h6v4H2v-4h6l-.5-4A3.500 3.500 0 0 1 10 1zM3 16.500h14V18H3z" {...F} /></Icon>],
  ['历史画笔', <Icon s={20} sw={1.500}><path d="M4 6c3-4 8-4 11-2" /><path d="m1 6 5-3v5zM19 5l-8 7 1.500 1.500zM10.500 12C8 12 8 15 3 16c4 2.500 9 1 9-2.500z" {...F} /><path d="M17 10v6l-4 2" strokeDasharray="1.500 1.500" strokeWidth="1" /></Icon>],
  ['橡皮', <Icon s={20}><path d="m9 4 9-1-6 8-10 1z" {...F} /><path d="m2 13 10-1v4L3 17zM13 12l5.500-7.500V9L13 16z" {...F} opacity=".75" /></Icon>],
  ['渐变', <Icon s={20}><defs><linearGradient id="toolGrad"><stop stopColor="#444" /><stop offset="1" stopColor="#ddd" /></linearGradient></defs><path d="M2.500 4.500h15v11h-15z" fill="url(#toolGrad)" strokeWidth="1.500" /></Icon>],
  ['模糊', <Icon s={20}><path d="M10 2c1 4 5 7 5 11a5 5 0 0 1-10 0c0-4 4-7 5-11z" {...F} /></Icon>],
  ['减淡', <Icon s={20}><circle cx="8" cy="7.500" r="5.500" {...F} /><path d="m12 11 6 6.500" strokeWidth="2.500" /></Icon>],
];
const tools3: [string, ReactNode][] = [
  ['钢笔', <Icon s={20}><path d="m13 1 6 6-1.500 1.500-6-6zM11 4l5 5c0 4-4 6-9 7.500l-5 2 5.500-6A1.500 1.500 0 1 0 6 11l-4.500 7 2-6C5 7 7 4 11 4z" {...F} /></Icon>],
  ['文字', <Icon s={20}><path d="M3 3h14v4h-1.200c-.3-2-1-2.600-4.300-2.600v11.100c0 1 .5 1.200 2 1.300v.7h-7v-.7c1.500-.1 2-.3 2-1.300V4.400C5.200 4.400 4.500 5 4.200 7H3z" {...F} /></Icon>],
  ['路径选择', <Icon s={20} sw={1.400}><path d="M6 2v14l3.500-3.500 2.500 6 2-1-2.500-5.500H16z" /></Icon>],
  ['矩形', <Icon s={20} sw={1.500}><path d="M3.500 5h13v10.500h-13z" fill="#8c8c8c" /></Icon>],
];
const tools4: [string, ReactNode][] = [
  ['抓手', <Icon s={20} sw={2.200}><path d="M6 10 4.500 4M9 9l-.5-7M12 9l.7-7M14.500 10.500 17 5M6.500 14 2 9.500" strokeLinecap="round" /><path d="M5 10c3-2 7-2 10 0l3-1c-1 4-3 9-5 9.500H8C6 17.500 4 14 5 10z" {...F} /></Icon>],
  ['缩放', <Icon s={20}><circle cx="8" cy="7" r="5" fill="#9a9a9a" strokeWidth="1.600" /><path d="m12 11 6 6.500" strokeWidth="2.800" /></Icon>],
];
const ToolSet = ({ items, on }: { items: [string, ReactNode][]; on?: string }) => (
  <>{items.map(([n, i]) => <Tool key={n} aria-label={n} $on={n === on} $plain={n === '缩放'}>{i}</Tool>)}</>
);
const Buttons = ({ items, name }: { items: ReactNode[]; name: string }) => (
  <>{items.map((i, n) => <OptionButton key={n} aria-label={`${name} ${n + 1}`}>{i}</OptionButton>)}</>
);

const menus = ['文件(F)', '编辑(E)', '图像(I)', '图层(L)', '文字(Y)', '选择(S)', '滤镜(T)', '3D(D)', '视图(V)', '窗口(W)', '帮助(H)'];

const Tools = () => (
  <ToolColumn>
    <DockHeader><Icon w={7} h={7} stroke="none" fill="currentColor"><path d="M-1 0v7l3-3.500zM3 0v7l3-3.500z" /></Icon></DockHeader>
    <ToolGrip><Grip $h as="div" /></ToolGrip>
    <ToolSet items={tools1} on="移动" /><ToolRule />
    <ToolSet items={tools2} /><ToolRule />
    <ToolSet items={tools3} /><ToolRule />
    <ToolSet items={tools4} />
    <SwatchRow>
      <Icon w={9} h={10}><path d="M3 4h6v6H3z" {...F} /><path d="M-1 .5h6v6h-6z" fill="#222" /></Icon>
      <Icon w={12} h={11} sw={1.500}><path d="M3 3h3c3 0 3 1 3 5" /><path d="m0 3 4-3v6zM6 7h6l-3 4z" {...F} /></Icon>
    </SwatchRow>
    <SwatchPair><Swatch $c="#f0101c" aria-label="前景色" /><Swatch $c="#101010" $back aria-label="背景色" /></SwatchPair>
    <Tool $plain aria-label="快速蒙版"><Icon s={20}><path d="M1.500 4h16v12h-16z" fill="#333" strokeWidth="1.300" /><circle cx="9.500" cy="10" r="4" strokeDasharray="1.500 1" /></Icon></Tool>
    <Tool aria-label="屏幕模式"><Icon s={20}><path d="M1.500 8h10v8h-10z" fill="#777" /><path d="M6 4h11.500v8H6z" fill="#8c8c8c" strokeWidth="1.300" /></Icon></Tool>
  </ToolColumn>
);

const SideDock = () => (
  <IconDock>
    <DockHeader $end><Icon w={8} h={7} stroke="none" fill="currentColor"><path d="M3.500 0v7L0 3.500zM8 0v7L4.500 3.500z" /></Icon></DockHeader>
    <DockGroup><Grip $h /><DockButton aria-label="历史记录"><Icon s={18}><path d="M2.500 1.500h4v4h-4zM2.500 7.500h4v4h-4z" /><path d="M2 13h5v4H2zM9 1h6l-3 2c5 3 4 9 0 12 1-4 1-7-2-9l-1 2z" {...F} /></Icon></DockButton></DockGroup>
    <DockGroup><Grip $h /><DockButton aria-label="属性"><Icon s={18}><path d="m6.500 1 5 2v6l-5 2-5-2V3zM13 1h4v4h-4zM13 6.500h4v4h-4zM1 13.500h16V17H1z" {...F} /><path d="m1.500 3 5 2 5-2M6.500 5v6" stroke="#535353" /></Icon></DockButton></DockGroup>
    <DockGroup><Grip $h /><DockButton aria-label="图层复合"><Icon w={20} h={20} sw={1.200}><path d="M.5 1h8v11h-3zM.5 1l8 11M8.500 1l4 7M12.500 8h7v11h-7zM12.500 8l7 11M5.500 12l6 7h3" /></Icon></DockButton></DockGroup>
    <DockGroup><Grip $h />
      <DockButton aria-label="画笔预设"><Icon s={18}><path d="M5 11h8v7H5z" {...F} /><path d="M7 11 3 4M9 11V3M11 11l4-6" strokeWidth="1.500" /><path d="m1 1 4 2-1 3zM7.500 0h3v4h-3zM13 3h5l-4 4z" {...F} /></Icon></DockButton>
      <DockButton aria-label="画笔"><Icon w={20} h={18} sw={1.600}><path d="M0 5h20M0 13h20" /><path d="M1 2c4 0 9 0 9 3S4 8 1 2zM11 13c2-4 6-4 8-4v8c-2 0-6 0-8-4z" {...F} /></Icon></DockButton>
    </DockGroup>
    <DockGroup><Grip $h />
      <DockButton aria-label="字符"><Icon s={18} sw={2}><path d="M1.500 15 6.500 3l5 12M3.500 11h6" /><path d="M14.500 1v16" strokeWidth="1.200" /></Icon></DockButton>
      <DockButton aria-label="段落"><Icon s={18} sw={1.400}><path d="M9 2H7a4 4 0 0 0 0 8h2z" {...F} /><path d="M7 2.500h6M9 2v15M12.500 2v15" /></Icon></DockButton>
    </DockGroup>
  </IconDock>
);

const SidePanels = () => (
  <Panels>
    <DockHeader $end><Icon w={5} h={7} stroke="none" fill="currentColor"><path d="M1 0v7l4-3.500z" /></Icon></DockHeader>
    <PanelTabs><PanelTab $on>颜色</PanelTab><PanelTab>色板</PanelTab><PanelMenu aria-label="面板菜单"><MenuGlyph /></PanelMenu></PanelTabs>
    <ColorPanel>
      <ColorLeft>
        <SwatchPair $panel><Swatch $c="#f0101c" aria-label="前景色" /><Swatch $c="#101010" $back aria-label="背景色" /></SwatchPair>
        <Warn><Icon w={13} h={12} stroke="none" fill="currentColor"><path fillRule="evenodd" d="M6.500 0 13 12H0zM5.500 4v4h2V4zM5.500 9v2h2V9z" /></Icon><Chip $c="#d8242c" $s={13} aria-label="溢色" /></Warn>
      </ColorLeft>
      <Field><Icon s={8}><path d="M2 0a6 6 0 0 0 6 6" /></Icon></Field>
      <HuePointer><Icon w={6} h={7} stroke="none" fill="currentColor"><path d="M0 0h2l4 3.500L2 7H0z" /></Icon></HuePointer>
      <Hue />
    </ColorPanel>
    <PanelTabs><PanelTab $on>库</PanelTab><PanelTab>调整</PanelTab><PanelTab>样式</PanelTab><PanelMenu aria-label="面板菜单"><MenuGlyph /></PanelMenu></PanelTabs>
    <Row $h={27} $line $gap={3} $pad={8}>
      <DarkSelect label="库" value="" w={170} h={17} dim />
      <Spacer />
      <ViewButton $on aria-label="网格"><Icon s={12} stroke="none" fill="currentColor"><path d="M0 0h5.500v5.500H0zM6.500 0H12v5.500H6.500zM0 6.500h5.500V12H0zM6.500 6.500H12V12H6.500z" /></Icon></ViewButton>
      <ViewButton aria-label="列表"><Icon s={12} stroke="none" fill="currentColor"><path d="M0 0h12v2H0zM0 3.300h12v2H0zM0 6.600h12v2H0zM0 10h12v2H0z" /></Icon></ViewButton>
    </Row>
    <LibraryBody><Cloud /><p>要使用 Creative Cloud Libraries。<br />请安装 Creative Cloud 应用程序</p><GetLink href="#get">立即获取！</GetLink></LibraryBody>
    <Row $h={25} $line $pad={6}>
      <Small $dim aria-label="图形"><Icon s={15}><path d="M0 11 8 3v8zM8 1l5 5c2 2-1 7-4 6z" {...F} /></Icon></Small>
      <Small $dim aria-label="字符样式"><Icon s={14} sw={1.800}><path d="m1.500 13 5.500-12 5.500 12M4 9h6" /></Icon></Small>
      <Small $dim aria-label="图层样式"><Fx /></Small>
      <Small aria-label="颜色"><Chip as="span" $c="#a9333b" $s={14} $line="#8a8a8a" /></Small>
      <Spacer />
      <Small aria-label="Stock"><Icon s={14} sw={1.400}><path d="M.7.7h12.600v12.600H.7z" /><path d="M6 5H3.500v2H6v2.500H3.500M8.500 4v5.500h2M7.500 6H10.500" /></Icon></Small>
      <Small aria-label="同步"><Cloud w={17} h={14} /></Small>
      <Small $dim aria-label="删除"><Trash /></Small>
      <Small $w={8} aria-label="调整大小"><span /></Small>
    </Row>
    <PanelTabs><PanelTab $on>图层</PanelTab><PanelTab>通道</PanelTab><PanelTab>路径</PanelTab><PanelMenu aria-label="面板菜单"><MenuGlyph /></PanelMenu></PanelTabs>
    <Row $h={29} $line>
      <DarkSelect label="筛选" value="类型" w={80} h={18} lead={<Icon s={11} sw={1.500}><circle cx="6.500" cy="4.500" r="3.500" /><path d="M4 7 .5 10.500" /></Icon>} />
      <OptionGroup $ml={9}>
        <Small aria-label="像素"><Icon w={14} h={12}><path d="M.5.500h13v11H.5z" /><path d="m2 10 3-4 3 2 3-3 1 5z" {...F} /></Icon></Small>
        <Small aria-label="调整"><HalfCircle /></Small>
        <Small aria-label="文字"><Icon s={12}><path d="M1 1h10v3h-1c0-1-.5-1.500-3-1.500V10l1.500 1H3.500L5 10V2.500C2.500 2.500 2 3 2 4H1z" {...F} /></Icon></Small>
        <Small aria-label="形状"><Icon s={13} sw={1.200}><path d="M2.500 2.500h8v8h-8z" /><path d="M0 0h4v4H0zM9 0h4v4H9zM0 9h4v4H0zM9 9h4v4H9z" {...F} /></Icon></Small>
        <Small aria-label="智能对象"><Icon s={13} sw={1.200}><path d="M4.500.5h5l3 3v9h-6" /><path d="M0 6h7v7H0z" {...F} /></Icon></Small>
      </OptionGroup>
      <Spacer />
      <Chip aria-label="筛选开关" $c="#3c3c3c" $s={6} $line="#707070" />
    </Row>
    <Row $h={28} $line $gap={9}>
      <DarkSelect label="混合模式" value="正常" w={107} h={18} />
      <label htmlFor="opacity">不透明度:</label>
      <Spacer />
      <OptionGroup><Percent id="opacity" defaultValue="100%" /><DropButton aria-label="不透明度选项"><Down /></DropButton></OptionGroup>
    </Row>
    <Row $h={29} $pad={7}>
      <span>锁定:</span>
      <OptionGroup $ml={4}>
        <Small aria-label="透明像素"><Icon s={12} stroke="none" fill="currentColor"><path d="M0 0h4v4H0zM8 0h4v4H8zM4 4h4v4H4zM0 8h4v4H0zM8 8h4v4H8z" /><path d="M0 0h12v12H0z" opacity=".4" /></Icon></Small>
        <Small aria-label="图像像素"><Icon s={16} vb="0 0 20 20"><path d="M19 1 8 11l3 3zM7 11c-3 1-2 4-7 6 6 2 11 1 10-3z" {...F} /></Icon></Small>
        <Small aria-label="位置"><MoveCross /></Small>
        <Small $w={20} aria-label="全部"><Lock /></Small>
      </OptionGroup>
      <Spacer />
      <label htmlFor="fill">填充:</label>
      <OptionGroup $ml={8}><Percent id="fill" defaultValue="100%" /><DropButton aria-label="填充选项"><Down /></DropButton></OptionGroup>
    </Row>
    <LayerRow>
      <Eye aria-label="可见"><Icon w={13} h={9}><path d="M0 4.500C3-1 10-1 13 4.500 10 10 3 10 0 4.500z" {...F} /><circle cx="6.500" cy="4.500" r="2.300" stroke="#444" strokeWidth="1.500" /></Icon></Eye>
      <LayerMain>
        <Icon w={20} h={32} stroke="none"><path d="M0 0h20v32H0z" fill="#1a1a1a" /><path d="M1 1h18v30H1z" fill="#e2e2e0" /><path d="M1 1h18v2H1z" fill="#d03f42" /><path d="M2 9h16v1H2z" fill="#8dc26c" /><path d="M4 18h9M4 21h9M4 24h9M4 27h9" stroke="#999" strokeDasharray="2 1" /></Icon>
        <span>背景</span><Spacer /><Lock open />
      </LayerMain>
    </LayerRow>
    <LayerSpace />
    <PanelFoot>
      <Small $w={27} $dim aria-label="链接"><Icon w={15} h={8} sw={1.600}><rect x="1" y="1" width="7" height="6" rx="3" /><rect x="7" y="1" width="7" height="6" rx="3" /></Icon></Small>
      <Small $w={27} $dim aria-label="样式"><Fx /></Small>
      <Small $w={27} aria-label="蒙版"><Icon w={14} h={12}><path fillRule="evenodd" d="M0 0h14v12H0zM7 3a3.500 3.500 0 1 0 .1 0z" {...F} /></Icon></Small>
      <Small $w={27} aria-label="调整图层"><HalfCircle /></Small>
      <Small $w={27} aria-label="新建组"><Icon w={13} h={12}><path d="M0 1h5l1.500 2H13v9H0z" {...F} /></Icon></Small>
      <Small $w={27} aria-label="新建图层"><Icon w={12} h={13}><path d="M0 0h12v13H6V6H0z" {...F} /></Icon></Small>
      <Small $w={27} $dim aria-label="删除图层"><Trash /></Small>
    </PanelFoot>
  </Panels>
);

export default function App() {
  return (
    <>
      <GlobalStyle />
      <Shell>
        <MenuBar>
          <MenuList><Logo>Ps</Logo>{menus.map(m => <MenuItem key={m}>{m}</MenuItem>)}</MenuList>
          <WindowButtons>
            <WindowButton aria-label="最小化"><Icon w={12} h={8} stroke="none" fill="currentColor"><path d="M1 3.500h10V7H1z" /></Icon></WindowButton>
            <WindowButton aria-label="还原"><Icon w={13} h={8} sw={2}><path d="M1 2h6v5H1zM4 2V-1h8v6H8" /></Icon></WindowButton>
            <WindowButton $wide aria-label="关闭"><Icon w={11} h={8} sw={2.500}><path d="m1-3 9 9M10-3 1 6" /></Icon></WindowButton>
          </WindowButtons>
        </MenuBar>
        <OptionsBar>
          <Grip />
          <OptionGroup $ml={13}>
            <Icon w={20} h={16}><path d="M1 0v12l3-3 5-.5z" {...F} /><path d="M14 6v9M9.500 10.500h9M12.500 7.500 14 6l1.500 1.500M12.500 13.500 14 15l1.500-1.500M11 9l-1.500 1.500L11 12M17 9l1.500 1.500L17 12" /></Icon>
          </OptionGroup>
          <OptionGroup $ml={7}><Icon w={6} h={4} stroke="none" fill="currentColor"><path d="M0 0h6L3 4z" /></Icon></OptionGroup>
          <Divider $gap={7} />
          <CheckLabel><CheckBox type="checkbox" defaultChecked />自动选择：</CheckLabel>
          <OptionGroup $ml={8}><DarkSelect label="自动选择" value="组" w={52} dim /></OptionGroup>
          <Divider $gap={9} />
          <CheckLabel><CheckBox type="checkbox" />显示变换控件</CheckLabel>
          <Divider $gap={13} />
          <OptionGroup $ml={-6}><Buttons items={alignA} name="对齐" /></OptionGroup>
          <OptionGroup $ml={8}><Buttons items={alignB} name="水平对齐" /></OptionGroup>
          <Divider $gap={8} />
          <OptionGroup><Buttons items={distA} name="分布" /></OptionGroup>
          <OptionGroup $ml={8}><Buttons items={distB} name="水平分布" /></OptionGroup>
          <Divider $gap={7} />
          <OptionGroup><OptionButton aria-label="自动对齐"><Icon s={17}><path d="M1 1h6v4H1zM10 1h6v4h-6z" {...F} /><path d="M1.500 5.500h5v11h-5zM10.500 5.500h5v11h-5z" /></Icon></OptionButton></OptionGroup>
          <Divider $gap={8} />
          <Muted>3D 模式：</Muted>
          <OptionGroup $ml={4}><Buttons items={mode3d} name="3D" /></OptionGroup>
          <Spacer />
          <DarkSelect label="工作区" value="基本功能" w={105} h={20} dim />
        </OptionsBar>
        <Body>
          <Tools />
          <DocumentArea>
            <TabBar><DocTab>UI界面-包厢.jpg @ 66.7%(RGB/8#)<TabClose aria-label="关闭文档">×</TabClose></DocTab></TabBar>
            <Workspace>
              <Corner />
              <RulerTop><RulerTopScale>{Array.from({ length: 47 }, (_, i) => <TickX key={i}>{Math.abs(i * 50 - 850)}</TickX>)}</RulerTopScale></RulerTop>
              <Scroll />
              <RulerLeft>
                <RulerLeftScale>
                  {Array.from({ length: 28 }, (_, i) => {
                    const digits = String(Math.abs(i * 50 - 150)).split('');
                    return <TickY key={i} $n={digits.length}>{digits.map((d, n) => <span key={n}>{d}</span>)}</TickY>;
                  })}
                </RulerLeftScale>
              </RulerLeft>
              <Canvas><PhoneArt /></Canvas>
              <Scroll />
              <StatusBar>
                <Zoomed>66.67%</Zoomed>
                <StatusInfo>
                  <Icon w={13} h={12}><path d="M5 3H1v9h9V9" /><path d="M8 0v2C5 2 4 4 4 8c1-2 2-3 4-3v2l4.500-3.500z" {...F} /></Icon>
                  <span>文档:2.01M/2.01M</span>
                  <Icon w={7} h={10}><path d="M0 2v9l7-4.500z" {...F} /></Icon>
                </StatusInfo>
              </StatusBar>
            </Workspace>
          </DocumentArea>
          <SideDock />
          <SidePanels />
        </Body>
      </Shell>
      <NewDialog />
    </>
  );
}
